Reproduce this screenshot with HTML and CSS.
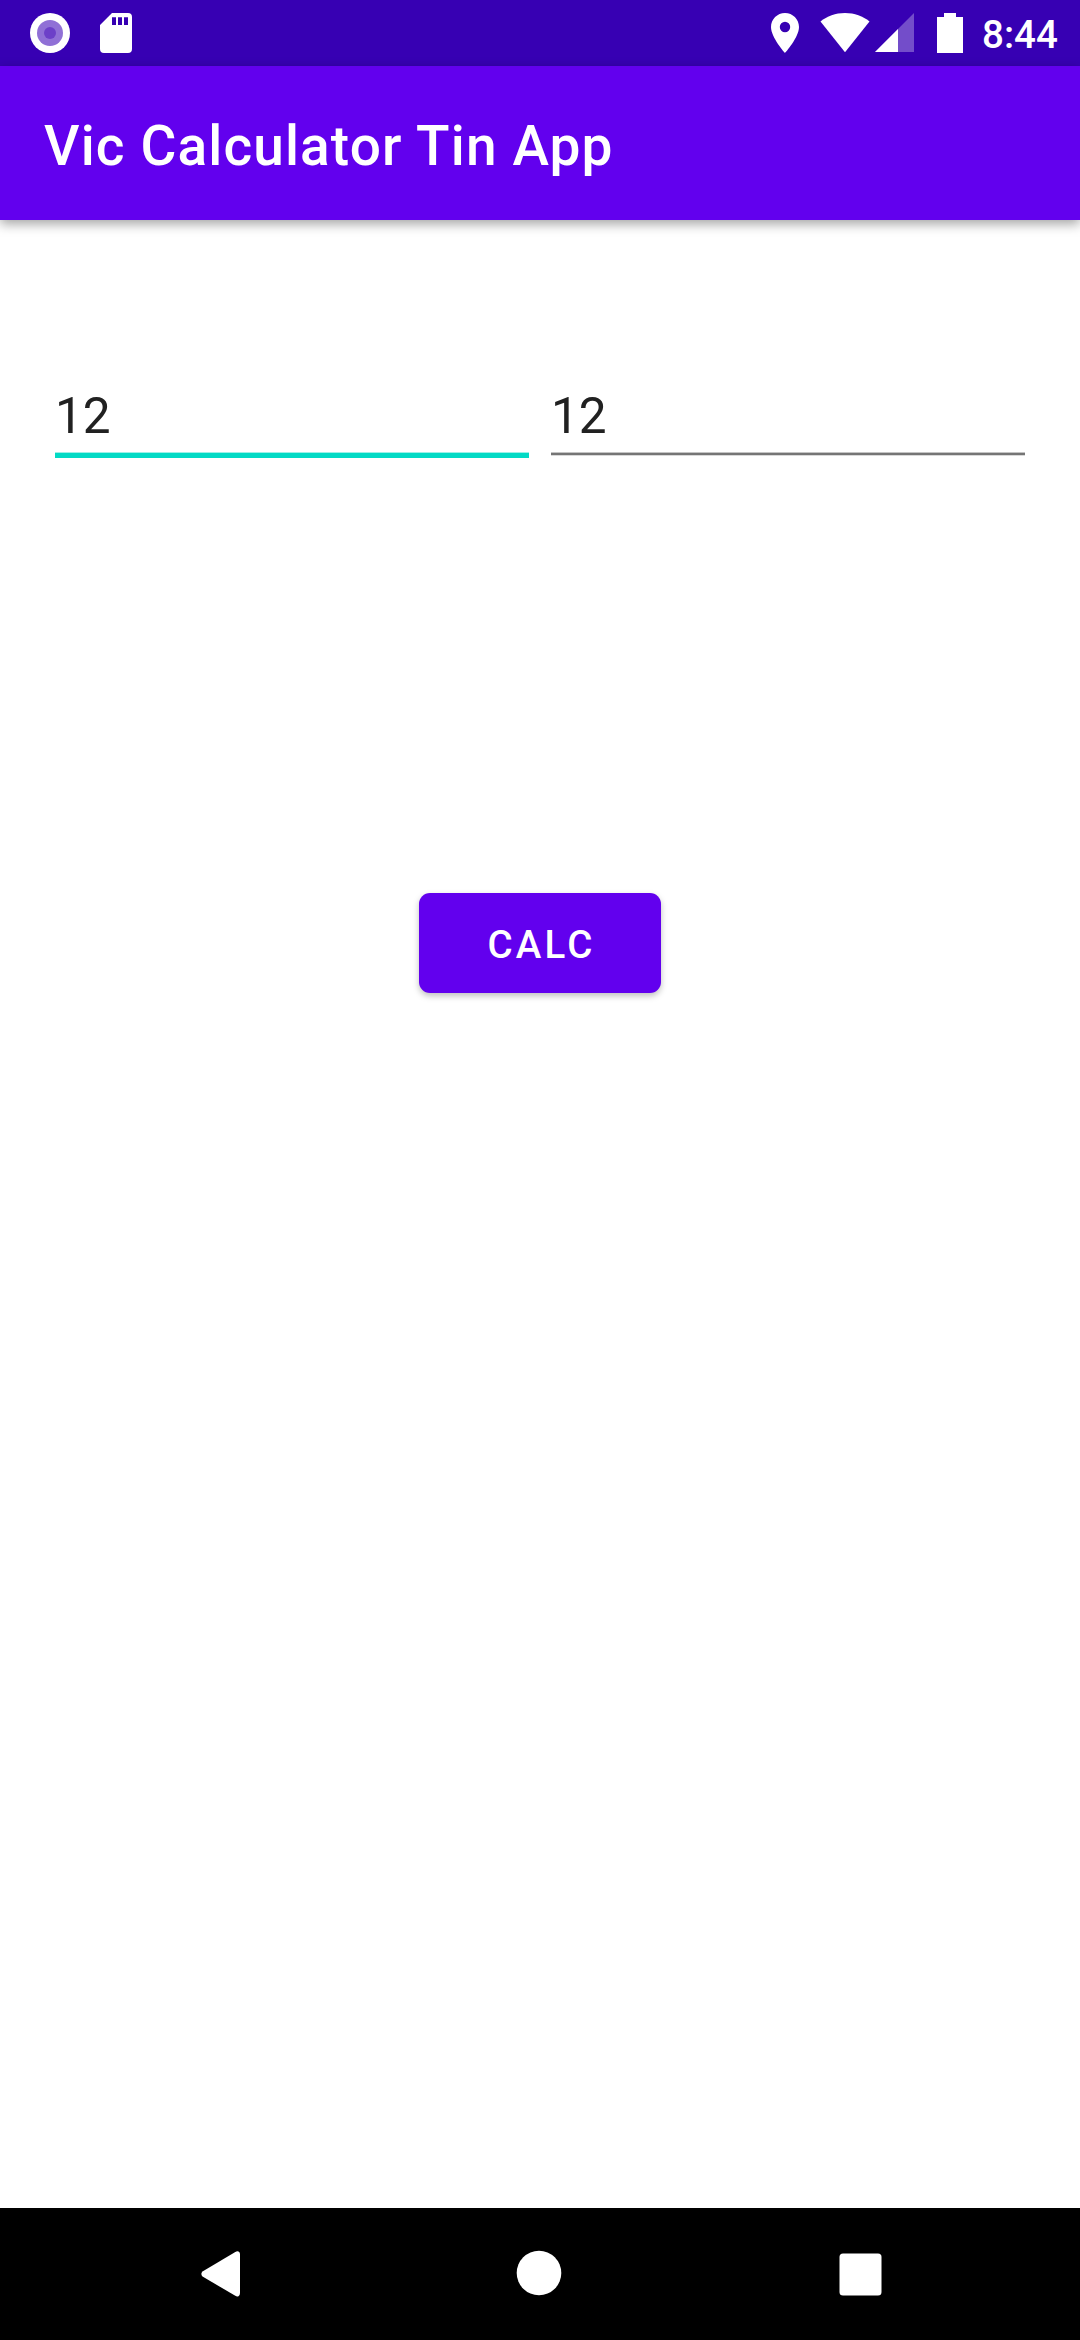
FILE: index.html
```html
<!DOCTYPE html>
<html lang="en">
<head>
<meta charset="utf-8">
<title>Vic Calculator Tin App</title>
<link rel="stylesheet" href="styles.css">
</head>
<body>
<div class="screen">
  <div class="status-bar">
    <div class="notifications">
      <svg width="40" height="40" viewBox="0 0 40 40"><circle cx="20" cy="20" r="20" fill="#fff"/><circle cx="20" cy="20" r="13" fill="#9070d6"/><circle cx="20" cy="20" r="6" fill="#6c40c8"/></svg>
      <svg width="32" height="40" viewBox="0 0 32 40"><path fill="#fff" fill-rule="evenodd" d="M12 0H28Q32 0 32 4V36Q32 40 28 40H4Q0 40 0 36V12ZM12 4.3V12H16V4.3ZM18 4.3V12H22V4.3ZM24 4.3V12H28V4.3Z"/></svg>
    </div>
    <div class="system">
      <svg class="location" width="28" height="40" viewBox="5 2 14 20" preserveAspectRatio="none"><path fill="#fff" d="M12 2C8.13 2 5 5.13 5 9c0 5.250 7 13 7 13s7-7.750 7-13c0-3.870-3.130-7-7-7zm0 9.600a2.600 2.600 0 1 1 0-5.200 2.600 2.600 0 0 1 0 5.200z"/></svg>
      <svg class="wifi" width="50" height="40" viewBox="0 0 50 40"><path fill="#fff" d="M0.500 8.600C7 3 15.500 0 25 0S43 3 49.500 8.600L25 39.300Z"/></svg>
      <svg class="signal" width="39" height="40" viewBox="0 0 39 40"><path fill="#fff" fill-opacity=".3" d="M0 39 39 0V39Z"/><path fill="#fff" d="M0 39 23 16V39Z"/></svg>
      <svg class="battery" width="26" height="40" viewBox="0 0 26 40"><path fill="#fff" d="M7 0H19V4H26V40H0V4H7Z"/></svg>
      <span class="clock">8:44</span>
    </div>
  </div>
  <header class="app-bar"><h1 class="title">Vic Calculator Tin App</h1></header>
  <main class="content">
    <div class="fields">
      <div class="field field-active">12</div>
      <div class="field">12</div>
    </div>
    <button class="calc" type="button">CALC</button>
  </main>
  <nav class="nav-bar">
    <svg class="back" width="40" height="46" viewBox="0 0 40 46"><path fill="#fff" d="M34.300.900Q36 0 37.500.500T39 3V42Q39 44.600 37.500 45.200T34.300 44.800L1.500 25.500Q-.800 23 1.500 20.500Z"/></svg>
    <svg class="home" width="46" height="46" viewBox="0 0 46 46"><circle cx="23" cy="23" r="22.300" fill="#fff"/></svg>
    <svg class="recents" width="43" height="43" viewBox="0 0 43 43"><rect x=".5" y=".5" width="42" height="42" rx="3.500" fill="#fff"/></svg>
  </nav>
</div>
</body>
</html>
```
FILE: styles.css
```css
body {
  margin: 0;
  background: #fff;
  font-family: Roboto, "Liberation Sans", sans-serif;
}

svg {
  display: block;
  flex: none;
}

.screen {
  display: flex;
  flex-direction: column;
  width: 1080px;
  height: 2340px;
  overflow: hidden;
}

.status-bar {
  display: flex;
  justify-content: space-between;
  box-sizing: border-box;
  height: 66px;
  padding: 13px 22px 0 30px;
  background: #3700b3;
}

.notifications {
  display: flex;
  gap: 30px;
}

.system {
  display: flex;
}

.wifi {
  margin-left: 21px;
}

.signal {
  margin-left: 5px;
}

.battery {
  margin-left: 23px;
}

.clock {
  width: 76px;
  margin-left: 19px;
  color: #fff;
  font-size: 38.5px;
  font-weight: 500;
  line-height: 44px;
  white-space: nowrap;
}

.app-bar {
  display: flex;
  align-items: center;
  box-sizing: border-box;
  height: 154px;
  padding: 6px 0 0 44px;
  background: #6200ee;
  box-shadow: 0 4px 11px rgba(0, 0, 0, 0.36);
}

.title {
  margin: 0;
  color: #fff;
  font-size: 55px;
  font-weight: 500;
  line-height: 64px;
  letter-spacing: 1.13px;
}

.content {
  display: flex;
  flex: 1;
  flex-direction: column;
  align-items: center;
}

.fields {
  display: flex;
  gap: 22px;
  align-self: stretch;
  height: 88px;
  margin: 150px 55px 0;
}

.field {
  flex: 1;
  box-sizing: border-box;
  height: 85px;
  border-bottom: 2px solid #757575;
  box-shadow: inset 0 -1px #c4c4c4, 0 1px #d8d8d8;
  color: #212121;
  font-size: 49.5px;
  line-height: 92px;
}

.field-active {
  height: 88px;
  border-bottom: 5px solid #03dac5;
  box-shadow: inset 0 -1px #9cf0e7;
}

.calc {
  width: 242px;
  height: 100px;
  margin-top: 435px;
  padding: 2px 0 0 3px;
  border: 0;
  border-radius: 11px;
  background: #6200ee;
  box-shadow: 0 3px 6px rgba(0, 0, 0, 0.25);
  color: #fff;
  font-family: inherit;
  font-size: 38.5px;
  font-weight: 500;
  letter-spacing: 3.1px;
}

.nav-bar {
  display: flex;
  align-items: flex-start;
  height: 132px;
  background: #000;
}

.back {
  margin: 43px 0 0 201px;
}

.home {
  margin: 42px 0 0 275px;
}

.recents {
  margin: 45px 0 0 277px;
}
```
